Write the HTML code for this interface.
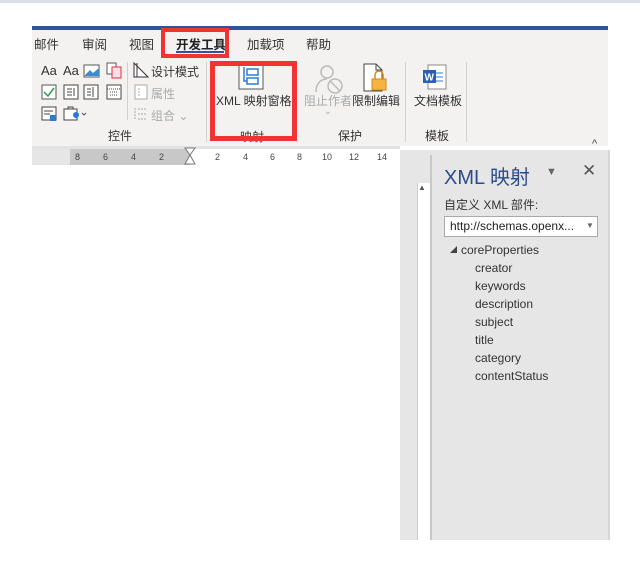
<!DOCTYPE html><html><head><meta charset="utf-8"><style>
body{margin:0;width:640px;height:568px;background:#fff;position:relative;overflow:hidden;font-family:"Liberation Sans","Noto Sans CJK SC",sans-serif;color:#333}
div,span{position:absolute}
.t{font-size:12.5px;white-space:nowrap}
.s{font-size:12px;white-space:nowrap}
.sep{width:1px;background:#d0d0d0}
.r{font-size:9px;color:#444;top:152px}
.c{font-size:12px;color:#333;left:475px}
</style></head><body>
<div style="left:0;top:0;width:640px;height:3px;background:#d9e0ea"></div>
<div style="left:32px;top:26px;width:576px;height:4px;background:#2b579a"></div>
<div style="left:32px;top:30px;width:576px;height:116px;background:#f3f2f1"></div>
<span class="t" style="left:34px;top:34px">邮件</span>
<span class="t" style="left:82px;top:34px">审阅</span>
<span class="t" style="left:129px;top:34px">视图</span>
<span class="t" style="left:176px;top:34px;font-weight:bold;color:#222">开发工具</span>
<div style="left:176px;top:51px;width:48px;height:2px;background:#2b579a"></div>
<span class="t" style="left:247px;top:34px">加载项</span>
<span class="t" style="left:306px;top:34px">帮助</span>
<div style="left:161px;top:28px;width:60px;height:22px;border:4px solid #f03434"></div>
<span class="s" style="left:41px;top:63px;font-size:13px">Aa</span>
<span class="s" style="left:63px;top:63px;font-size:13px">Aa</span>
<svg style="position:absolute;left:83px;top:63px" width="18" height="16"><rect x="1" y="2" width="15" height="12" fill="#fff" stroke="#555"/><path d="M2 12 L7 7 L10 10 L16 5 V13 H2Z" fill="#3a8ad6"/></svg>
<svg style="position:absolute;left:106px;top:62px" width="16" height="18"><rect x="1" y="1" width="9" height="11" fill="#fff" stroke="#555"/><rect x="6" y="5" width="9" height="11" fill="#fde" stroke="#d33"/></svg>
<svg style="position:absolute;left:41px;top:84px" width="16" height="16"><rect x="1" y="1" width="14" height="14" fill="#fff" stroke="#555"/><path d="M3 8 L7 12 L13 4" stroke="#2a9a4a" stroke-width="1.5" fill="none"/></svg>
<svg style="position:absolute;left:63px;top:84px" width="16" height="16"><rect x="1" y="1" width="14" height="14" fill="#fff" stroke="#444"/><path d="M4 5H9M4 8H9M4 11H9M11 4V12" stroke="#444"/></svg>
<svg style="position:absolute;left:83px;top:84px" width="16" height="16"><rect x="1" y="1" width="14" height="14" fill="#fff" stroke="#444"/><path d="M4 5H8M4 8H8M4 11H8M10 3V13" stroke="#444"/></svg>
<svg style="position:absolute;left:106px;top:84px" width="16" height="16"><rect x="1" y="1" width="14" height="14" fill="#fff" stroke="#444"/><path d="M1 5H15M4 8H12M4 11H12" stroke="#444" stroke-dasharray="1 1"/></svg>
<svg style="position:absolute;left:41px;top:106px" width="16" height="16"><rect x="1" y="1" width="14" height="13" fill="#fff" stroke="#444"/><path d="M3 5H12M3 8H9" stroke="#444"/><rect x="9" y="9" width="6" height="6" fill="#2b7bd6"/></svg>
<svg style="position:absolute;left:63px;top:106px" width="26" height="16"><rect x="1" y="3" width="13" height="11" fill="#fff" stroke="#444"/><path d="M5 3V1H10V3" stroke="#444" fill="none"/><circle cx="13" cy="9" r="3" fill="#2b7bd6"/><path d="M19 7L21 9L23 7" stroke="#555" fill="none"/></svg>
<div class="sep" style="left:127px;top:62px;height:58px"></div>
<svg style="position:absolute;left:133px;top:62px" width="16" height="16"><path d="M1 1V15H15Z M1 1L15 15" fill="#fff" stroke="#333"/><path d="M4 1V15" stroke="#333"/></svg>
<span class="s" style="left:151px;top:63px">设计模式</span>
<svg style="position:absolute;left:134px;top:84px" width="14" height="16"><rect x="1" y="1" width="12" height="14" fill="#fff" stroke="#aaa"/><path d="M4 5H6M4 8H6M4 11H6" stroke="#aaa"/></svg>
<span class="s" style="left:151px;top:85px;color:#aaa">属性</span>
<svg style="position:absolute;left:133px;top:106px" width="16" height="16"><path d="M2 2V14M5 3H14M5 8H14M5 13H14" stroke="#aaa" stroke-dasharray="2 1"/></svg>
<span class="s" style="left:151px;top:107px;color:#aaa">组合 ⌄</span>
<span class="s" style="left:108px;top:127px">控件</span>
<div class="sep" style="left:206px;top:62px;height:80px"></div>
<svg style="position:absolute;left:238px;top:64px" width="26" height="26"><rect x="1" y="1" width="24" height="24" fill="#fff" stroke="#555"/><rect x="9" y="5" width="11" height="6" fill="none" stroke="#2b7bd6" stroke-width="1.5"/><rect x="9" y="14" width="11" height="6" fill="none" stroke="#2b7bd6" stroke-width="1.5"/><path d="M6 3V17H9" stroke="#2b7bd6" stroke-width="1.5" fill="none"/></svg>
<span class="s" style="left:216px;top:92px">XML 映射窗格</span>
<span class="s" style="left:240px;top:128px">映射</span>
<div style="left:210px;top:61px;width:77px;height:70px;border:5px solid #f03434"></div>
<svg style="position:absolute;left:314px;top:64px" width="30" height="30"><circle cx="13" cy="8" r="6" fill="none" stroke="#bbb" stroke-width="1.5"/><path d="M2 28C2 18 8 15 13 15" stroke="#bbb" stroke-width="1.5" fill="none"/><circle cx="21" cy="22" r="7" fill="none" stroke="#bbb" stroke-width="1.5"/><path d="M16 17L26 27" stroke="#bbb" stroke-width="1.5"/></svg>
<span class="s" style="left:304px;top:92px;color:#aaa">阻止作者</span>
<span class="s" style="left:324px;top:106px;color:#aaa;font-size:9px">⌄</span>
<svg style="position:absolute;left:362px;top:63px" width="28" height="30"><path d="M2 1H14L20 7V28H2Z" fill="#fff" stroke="#444"/><path d="M14 1V7H20" fill="none" stroke="#444"/><rect x="10" y="16" width="14" height="11" fill="#f5b342" stroke="#d08a1a"/><path d="M13 16V12A4 4 0 0 1 21 12V16" fill="none" stroke="#d08a1a" stroke-width="1.5"/></svg>
<span class="s" style="left:352px;top:92px">限制编辑</span>
<span class="s" style="left:338px;top:127px">保护</span>
<div class="sep" style="left:405px;top:62px;height:80px"></div>
<svg style="position:absolute;left:422px;top:63px" width="26" height="28"><rect x="6" y="2" width="18" height="24" fill="#fff" stroke="#888"/><path d="M13 10H21M13 14H21M13 18H21" stroke="#2b7bd6"/><rect x="1" y="7" width="13" height="13" fill="#2b5fb5"/><text x="2.5" y="17.5" font-size="10" font-weight="bold" fill="#fff" font-family="Liberation Sans">W</text></svg>
<span class="s" style="left:414px;top:92px">文档模板</span>
<span class="s" style="left:425px;top:127px">模板</span>
<div class="sep" style="left:466px;top:62px;height:80px"></div>
<span style="left:592px;top:138px;font-size:11px;color:#444">^</span>
<div style="left:32px;top:146px;width:368px;height:3px;background:#e2e2e2"></div>
<div style="left:32px;top:149px;width:38px;height:16px;background:#e6e6e6"></div>
<div style="left:70px;top:149px;width:120px;height:16px;background:#c8c8c8"></div>
<div style="left:190px;top:149px;width:210px;height:16px;background:#fff"></div>
<span class="r" style="left:75px">8</span><span class="r" style="left:103px">6</span><span class="r" style="left:131px">4</span><span class="r" style="left:159px">2</span>
<svg style="position:absolute;left:184px;top:147px" width="12" height="18"><path d="M1 1H11L6 8L11 17H1L6 8Z" fill="#fff" stroke="#777"/></svg>
<span class="r" style="left:215px">2</span><span class="r" style="left:243px">4</span><span class="r" style="left:270px">6</span><span class="r" style="left:297px">8</span><span class="r" style="left:322px">10</span><span class="r" style="left:349px">12</span><span class="r" style="left:377px">14</span>
<div style="left:400px;top:150px;width:210px;height:390px;background:#e6e6e6"></div>
<div style="left:417px;top:183px;width:13px;height:357px;background:#fff;border-left:1px solid #ccc"></div>
<span style="left:418px;top:183px;font-size:8px;color:#555">▲</span>
<div style="left:430px;top:155px;width:2px;height:385px;background:#c8c8c8"></div>
<div style="left:608px;top:150px;width:2px;height:390px;background:#d6d6d6"></div>
<span style="left:444px;top:161px;font-size:20px;color:#2b4c8c;white-space:nowrap">XML 映射</span>
<span style="left:546px;top:166px;font-size:11px;color:#666">▼</span>
<span style="left:582px;top:161px;font-size:17px;color:#555">✕</span>
<span class="s" style="left:444px;top:196px;color:#333">自定义 XML 部件:</span>
<div style="left:444px;top:216px;width:152px;height:19px;background:#fff;border:1px solid #aaa"></div>
<span class="s" style="left:450px;top:219px;color:#222">http://schemas.openx...</span>
<span style="left:586px;top:221px;font-size:8px;color:#666">▼</span>
<span style="left:450px;top:245px;font-size:7px;color:#444">◢</span>
<span class="c" style="left:461px;top:243px">coreProperties</span>
<span class="c" style="top:261px">creator</span>
<span class="c" style="top:279px">keywords</span>
<span class="c" style="top:297px">description</span>
<span class="c" style="top:315px">subject</span>
<span class="c" style="top:333px">title</span>
<span class="c" style="top:351px">category</span>
<span class="c" style="top:369px">contentStatus</span>
</body></html>
